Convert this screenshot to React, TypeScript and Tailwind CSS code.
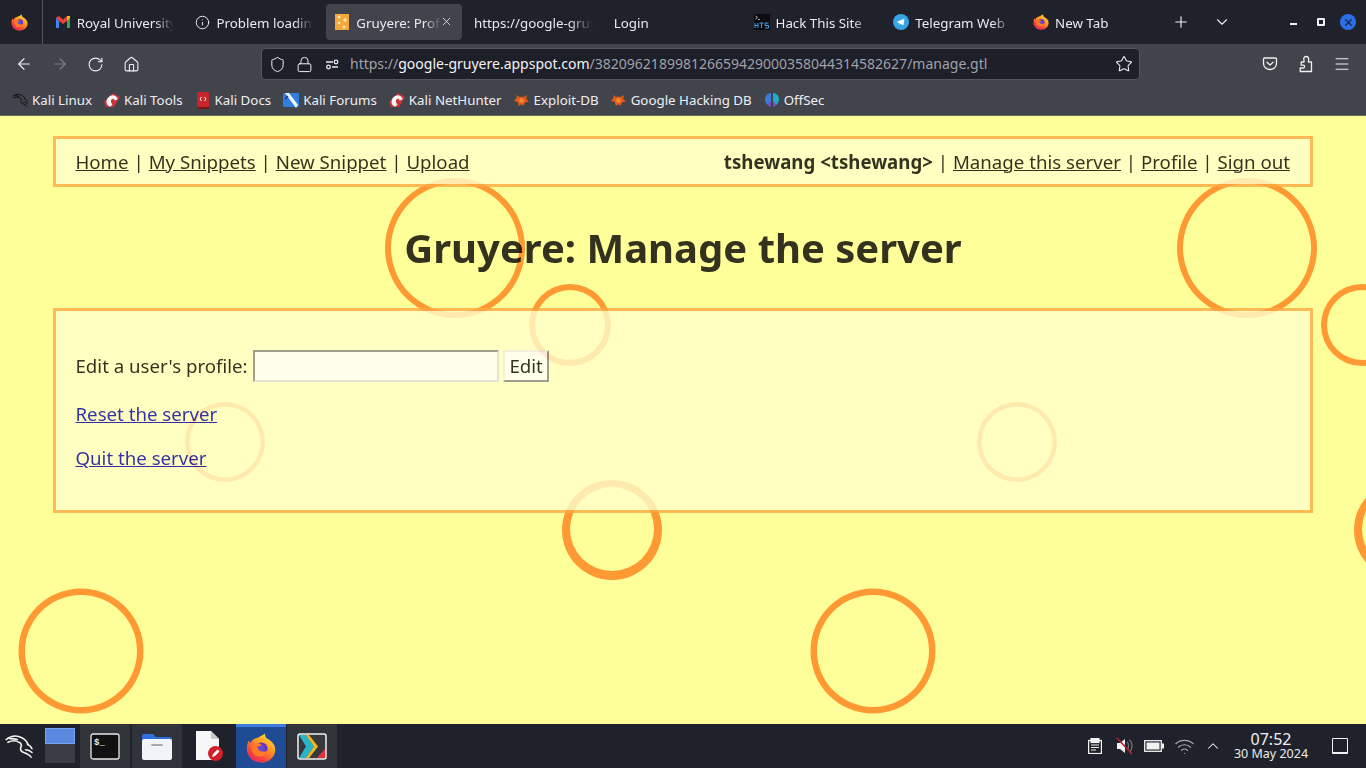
import React from "react";
import { ArrowLeft, ArrowRight, RotateCw, Home, Shield, Lock, Star, Menu, Plus, ChevronDown, ChevronUp, X, Info, Wifi } from "lucide-react";

function FirefoxLogo({ size = 16, id }: { size?: number; id: string }) {
  return (
    <svg width={size} height={size} viewBox="0 0 32 32" className="shrink-0">
      <defs>
        <linearGradient id={id + "a"} x1="0.85" y1="0.05" x2="0.25" y2="0.95">
          <stop offset="0" stopColor="#ffe03a" />
          <stop offset="0.4" stopColor="#ff9a22" />
          <stop offset="0.8" stopColor="#f5423e" />
          <stop offset="1" stopColor="#e92c62" />
        </linearGradient>
        <radialGradient id={id + "b"} cx="0.5" cy="0.5" r="0.5">
          <stop offset="0" stopColor="#5a57ea" />
          <stop offset="1" stopColor="#6a2bb8" />
        </radialGradient>
      </defs>
      <path d="M16 31.500C7 31.500 .8 24.500.8 16.500c0-3.200.9-6.300 2.600-8.700.2 1.400.7 2.500 1.400 3.200C6 7.500 9 5.500 11 5.500 13.500 4.500 17 3 20.500.5c-.6 3 .6 4.700 2.800 6C28.500 9.500 31.200 13 31.200 18c0 7.500-6.700 13.500-15.200 13.500z" fill={`url(#${id}a)`} />
      <circle cx="16.500" cy="16.500" r="6.500" fill={`url(#${id}b)`} />
      <path d="M8 12.500c3-1.800 6-1.500 9 .3-1.700 1.200-3.300 1.700-4.500 1.700-.3 3 2.500 5.500 6.500 5.300 2 0 4-1 5-2.800-.3 4.500-4.300 8-9 8-5 0-9-3.500-9-8.500 0-1.500 1-3 2-4z" fill="#ff7a26" />
    </svg>
  );
}

function Gmail() {
  return (
    <svg width="14" height="12" viewBox="0 0 14 12" className="shrink-0">
      <path d="M0 1.500V12h3V5z" fill="#4285f4" />
      <path d="M14 1.500V12h-3V5z" fill="#34a853" />
      <path d="M0 1.500 3 0l4 3.500L11 0l3 1.500L11 5 7 8 3 5z" fill="#ea4335" />
      <path d="M11 0l3 0v2l-3 3z" fill="#fbbc04" />
    </svg>
  );
}

function Cheese() {
  return (
    <svg width="14" height="16" viewBox="0 0 14 16" className="shrink-0">
      <rect width="14" height="16" fill="#f5a73c" />
      <circle cx="4" cy="3" r="1.500" fill="#ffe9b0" />
      <circle cx="10" cy="6" r="1.800" fill="#ffe9b0" />
      <circle cx="4" cy="9" r="1.300" fill="#ffe9b0" />
      <circle cx="9" cy="13" r="1.500" fill="#ffe9b0" />
    </svg>
  );
}

function Hts() {
  return (
    <svg width="16" height="16" viewBox="0 0 16 16" className="shrink-0">
      <rect width="16" height="16" fill="#0b0d12" />
      <path d="M1.500 2l2 1.500-2 1.500M4 5.500h2" stroke="#e6e6e6" strokeWidth="0.8" fill="none" />
      <path d="M1 9v5M4 9v5M1 11.500h3M5.500 9h4M7.500 9v5M14.500 9h-3.500v2.500h3.500V14H11" stroke="#3fa7e8" strokeWidth="1" fill="none" />
    </svg>
  );
}

function Telegram() {
  return (
    <svg width="16" height="16" viewBox="0 0 16 16" className="shrink-0">
      <circle cx="8" cy="8" r="8" fill="#37a3e6" />
      <path d="M3.500 8 11.500 4.500 10.300 11.500 7.800 9.700 6.500 11 6.300 8.900z" fill="#fff" />
    </svg>
  );
}

function Sliders() {
  return (
    <svg width="16" height="16" viewBox="0 0 16 16" fill="none" stroke="#e8e8ec" strokeWidth="1.300">
      <path d="M2 6h7M14 11H8" />
      <circle cx="12" cy="6" r="1.800" />
      <circle cx="4.500" cy="11" r="1.800" />
    </svg>
  );
}

function Pocket() {
  return (
    <svg width="16" height="16" viewBox="0 0 16 16" fill="none" stroke="#f0f0f4" strokeWidth="1.300" strokeLinecap="round" strokeLinejoin="round">
      <path d="M2.500 2h11c.6 0 1 .4 1 1v4.500c0 3.500-3 6-6.500 6s-6.500-2.500-6.500-6V3c0-.6.4-1 1-1z" />
      <path d="M5 6.300 8 9l3-2.700" />
    </svg>
  );
}

function PuzzlePiece() {
  return (
    <svg width="17" height="18" viewBox="0 0 17 18" fill="none" stroke="#f0f0f4" strokeWidth="1.300" strokeLinejoin="round">
      <path d="M14.500 16.500V7h-3c-.6-1 .4-1.500.2-3C11.500 2.300 10.200 1.500 9 1.500 7.500 1.500 6.500 3 6.800 4.500c.1.800.6 1.200.2 2.500H4.200v3.200h2c1 0 1.500.5 1.500 1.400s-.5 1.400-1.500 1.400h-3v3.500z" />
    </svg>
  );
}

function Dragon({ color, w, h }: { color: string; w: number; h: number }) {
  return (
    <svg width={w} height={h} viewBox="0 0 32 26" fill="none" stroke={color} strokeWidth="1.700" strokeLinecap="round" strokeLinejoin="round" className="shrink-0">
      <path d="M1 6C6 2 12 1 18 4c4 2 6 5 7 8" />
      <path d="M3 9c4-2 9-2 12 0 2 1 3 3 2 5-1 3 0 5 3 6 3 1 6 2 8 5" />
      <path d="M24 11c2 1 4 3 5 5" />
      <path d="M5 5c3 0 5 0 8 1" />
      <path d="M22 17c2 0 5 1 7 3" />
    </svg>
  );
}

function KaliTools() {
  return (
    <svg width="16" height="16" viewBox="0 0 16 16" className="shrink-0">
      <path d="M0 10 9 1l7 4-6 10H2z" fill="#c9343a" />
      <path d="M2.500 10c0-4 4-7.500 7.500-6.500 2 .6 3.500 2 3.500 4l-3 1c0-2-2-2-3-1s-1 3 1 5l-2 2C4 14.500 2.500 12 2.500 10z" fill="#f4f4f4" />
    </svg>
  );
}

function KaliDocs() {
  return (
    <svg width="14" height="17" viewBox="0 0 14 17" className="shrink-0">
      <rect x="1" y="0" width="12" height="15" rx="1" fill="#c8242b" />
      <rect x="1" y="15" width="12" height="2" fill="#7c1418" />
      <path d="M5.500 5 4 7l1.500 2M8.500 5 10 7 8.500 9" stroke="#fff" strokeWidth="1" fill="none" />
    </svg>
  );
}

function KaliForums() {
  return (
    <svg width="16" height="16" viewBox="0 0 16 16" className="shrink-0">
      <rect y="1" width="16" height="14" rx="1" fill="#2f7fe0" />
      <path d="M2 1l4 0 9 12-2 3z" fill="#f1f5fa" />
      <path d="M5 4 2 7" stroke="#16386a" strokeWidth="1.500" />
    </svg>
  );
}

function Exploit() {
  return (
    <svg width="15" height="13" viewBox="0 0 16 14" className="shrink-0">
      <path d="M2 1l3 2h6l3-2-1 4 3 3-4 1-2 4-2-2-3 2-1-4-4-2 3-3z" fill="#e05a18" />
      <circle cx="8" cy="7" r="2.500" fill="#f48a34" />
    </svg>
  );
}

function OffSec() {
  return (
    <svg width="16" height="16" viewBox="0 0 16 16" className="shrink-0">
      <path d="M7 1C3 1 1 4 1 7.500S3 13 7 15z" fill="#3a7bd8" />
      <path d="M9 1c4 0 6 3 6 6.500S13 13 9 15z" fill="#27a7c9" />
      <path d="M7 9v6l-3-2zM9 9v6l3-2z" fill="#8a3fc8" />
    </svg>
  );
}

function Tab({ icon, label, active, close }: { icon?: React.ReactNode; label: string; active?: boolean; close?: boolean }) {
  return (
    <div className="w-[139.75px] h-[44px] shrink-0 px-[2px] py-[4px]">
      <div className={`h-[36px] rounded-[4px] flex items-center pl-[8px] pr-[9px] gap-[6px] ${active ? "bg-[#42444c]" : ""}`}>
        {icon && <span className="w-[16px] shrink-0 flex justify-center">{icon}</span>}
        <span className="flex-1 min-w-0 mt-[1px] overflow-hidden whitespace-nowrap text-[13.33px] leading-[18px] text-[#e9e9ee] [mask-image:linear-gradient(to_right,black_80%,transparent)]">
          {label}
        </span>
        {close && <X size={13} strokeWidth={1.500} className="shrink-0 -ml-[7px] text-[#f0f0f4] -translate-y-[1px]" />}
      </div>
    </div>
  );
}

function Bookmark({ icon, label }: { icon: React.ReactNode; label: string }) {
  return (
    <div className="flex items-center gap-[4px] text-[13.33px] leading-[18px] text-[#eeeef2] whitespace-nowrap">
      <span className="w-[16px] flex justify-center">{icon}</span>
      <span>{label}</span>
    </div>
  );
}

type Ring = [number, number, number, number, number];
// cx, cy (page coordinates), outer radius, ring width, downward thickening
const rings: Ring[] = [
  [455, 248, 70, 6, 0],
  [570, 325, 41, 6, 0],
  [225, 442, 40, 4.500, 0],
  [612, 530, 50, 8, 1],
  [81, 651, 62.500, 6.500, 0],
];

function Bubbles() {
  const paths: React.ReactNode[] = [];
  rings.forEach(([cx, cy, r, s, d], i) => {
    [0, 792].forEach((o) => {
      const x = cx + o;
      const y = cy - 116;
      const ri = r - s;
      const c = (px: number, py: number, rr: number) =>
        `M${px - rr} ${py}a${rr} ${rr} 0 1 0 ${2 * rr} 0a${rr} ${rr} 0 1 0 ${-2 * rr} 0z`;
      paths.push(<path key={`${i}-${o}`} d={c(x, y, r) + c(x, y - d, ri)} fillRule="evenodd" fill="#ff9933" />);
    });
  });
  return (
    <svg className="absolute inset-0 w-full h-full" width="1366" height="608" viewBox="0 0 1366 608">
      {paths}
    </svg>
  );
}

function Sep() {
  return <span className="mx-[4.9px]">|</span>;
}

function TaskTile({ children, active, dim }: { children: React.ReactNode; active?: boolean; dim?: boolean }) {
  return (
    <div className={`w-[50px] h-[44px] shrink-0 flex items-center justify-center ${active ? "bg-[#1f4a94] border-t-[3px] border-[#3b7de0]" : dim ? "" : "bg-[#31333b]"}`}>
      {children}
    </div>
  );
}

export default function App() {
  return (
    <div className="w-[1366px] h-[768px] flex flex-col overflow-hidden font-['Noto_Sans',sans-serif] bg-[#ffff99]">
      {/* tab strip */}
      <div className="h-[44px] shrink-0 bg-[#1f212b] flex items-center text-white">
        <div className="w-[43px] h-[44px] shrink-0 flex items-center justify-center border-r border-[#50525a] pr-[4px]">
          <FirefoxLogo id="ffa" size={17} />
        </div>
        <div className="w-[1.75px] shrink-0" />
        <Tab icon={<Gmail />} label="Royal University of Bhutan" />
        <Tab icon={<Info size={15} strokeWidth={1.500} className="shrink-0 text-[#f0f0f4]" />} label="Problem loading page" />
        <Tab icon={<Cheese />} label="Gruyere: Profile" active close />
        <Tab label="https://google-gruyere.appspot.com" />
        <Tab label="Login" />
        <Tab icon={<Hts />} label="Hack This Site" />
        <Tab icon={<Telegram />} label="Telegram Web" />
        <Tab icon={<FirefoxLogo id="ffb" />} label="New Tab" />
        <Plus size={18} strokeWidth={1.500} className="shrink-0 ml-[9.25px] text-[#f4f4f8]" />
        <ChevronDown size={18} strokeWidth={1.500} className="shrink-0 ml-[23px] text-[#e8e8ee]" />
        <div className="flex-1 flex items-center justify-end pr-[10px] gap-[15px]">
          <div className="w-[7px] h-[2px] bg-[#f0f0f4] mt-[4px]" />
          <div className="w-[8px] h-[8px] border-2 border-[#f0f0f4] ml-[5px] rounded-[1px]" />
          <div className="w-[16px] h-[16px] rounded-full bg-[#2a6fe8] flex items-center justify-center">
            <X size={11} strokeWidth={3} className="text-[#1c2a48]" />
          </div>
        </div>
      </div>
      {/* toolbar */}
      <div className="h-[40px] shrink-0 bg-[#42444c] flex items-center text-[#f0f0f4]">
        <ArrowLeft size={18} strokeWidth={1.500} className="ml-[15px]" />
        <ArrowRight size={18} strokeWidth={1.500} className="ml-[18px] text-[#7d7f86]" />
        <RotateCw size={17} strokeWidth={1.500} className="ml-[18px]" />
        <Home size={17} strokeWidth={1.500} className="ml-[19px]" />
        <div className="w-[879px] h-[32px] ml-[121px] bg-[#1d1f29] rounded-[4px] border border-[#55575f] flex items-center pl-[7px] pr-[6px]">
          <Shield size={17} strokeWidth={1.400} />
          <Lock size={17} strokeWidth={1.400} className="ml-[10px]" />
          <span className="ml-[11px]"><Sliders /></span>
          <span className="ml-[10px] flex-1 text-[14px] leading-[20px] whitespace-nowrap text-[#a0a1a8]">
            https://<span className="text-[#f4f4f6]">google-gruyere.appspot.com</span>/382096218998126659429000358044314582627/manage.gtl
          </span>
          <Star size={18} strokeWidth={1.400} className="text-[#f0f0f4]" />
        </div>
        <span className="ml-[122px]"><Pocket /></span>
        <span className="ml-[19px]"><PuzzlePiece /></span>
        <Menu size={18} strokeWidth={1.400} className="ml-[19px]" />
      </div>
      {/* bookmarks */}
      <div className="h-[32px] shrink-0 bg-[#42444c] border-b border-[#6a6c58] flex items-center pl-[12px] gap-[12px] pt-[1px]">
        <Bookmark icon={<Dragon color="#0c0c0f" w={17} h={14} />} label="Kali Linux" />
        <Bookmark icon={<KaliTools />} label="Kali Tools" />
        <Bookmark icon={<KaliDocs />} label="Kali Docs" />
        <Bookmark icon={<KaliForums />} label="Kali Forums" />
        <Bookmark icon={<KaliTools />} label="Kali NetHunter" />
        <Bookmark icon={<Exploit />} label="Exploit-DB" />
        <Bookmark icon={<Exploit />} label="Google Hacking DB" />
        <Bookmark icon={<OffSec />} label="OffSec" />
      </div>
      {/* page */}
      <div className="relative flex-1 bg-[#ffff99] overflow-hidden">
        <Bubbles />
        <div className="relative opacity-80 px-[53px] pt-[20px] text-black text-[18.67px] leading-[26px]">
          <div className="h-[51px] border-[3px] border-[#ffaa44] bg-[#ffffcc] flex items-center justify-between pl-[19.5px] pr-[20px]">
            <div className="flex items-center">
              <a className="underline">Home</a><Sep />
              <a className="underline">My Snippets</a><Sep />
              <a className="underline">New Snippet</a><Sep />
              <a className="underline">Upload</a>
            </div>
            <div className="flex items-center">
              <b className="font-bold">tshewang &lt;tshewang&gt;</b><Sep />
              <a className="underline">Manage this server</a><Sep />
              <a className="underline">Profile</a><Sep />
              <a className="underline">Sign out</a>
            </div>
          </div>
          <div className="h-[121px] flex items-center justify-center">
            <h1 className="text-[40px] leading-[56px] font-bold">Gruyere: Manage the server</h1>
          </div>
          <div className="h-[205px] border-[3px] border-[#ffaa44] bg-[#ffffcc] pl-[19.5px] pr-[20px] pt-[39px]">
            <div className="flex items-center h-[32px]">
              <span>Edit a user's profile:</span>
              <input className="ml-[5.5px] w-[246px] h-[32px] bg-white border-2 border-t-[#888] border-l-[#888] border-r-[#ddd] border-b-[#ddd]" />
              <button className="ml-[4px] w-[46px] h-[32px] bg-white border-2 border-t-[#eee] border-l-[#eee] border-r-[#888] border-b-[#888] leading-[26px] text-center">Edit</button>
            </div>
            <div className="mt-[19px]"><a className="underline text-[#0000aa]">Reset the server</a></div>
            <div className="mt-[18px]"><a className="underline text-[#0000aa]">Quit the server</a></div>
          </div>
        </div>
      </div>
      {/* taskbar */}
      <div className="h-[44px] shrink-0 bg-[#20222b] flex items-center text-white">
        <div className="w-[45px] shrink-0 flex justify-center pr-[6px]">
          <Dragon color="#f2f2f2" w={30} h={24} />
        </div>
        <div className="w-[30px] h-[35px] shrink-0 flex flex-col mt-[-1px]">
          <div className="h-[16px] bg-[#5a87e0] border border-[#7aa2ee]" />
          <div className="h-[19px] bg-[#3a3c44]" />
        </div>
        <div className="w-[5px] shrink-0" />
        <TaskTile>
          <svg width="30" height="27" viewBox="0 0 30 27">
            <rect x="1" y="1" width="28" height="25" rx="2" fill="#111" stroke="#e8e8e8" strokeWidth="1.300" />
            <text x="4" y="12" fontSize="9" fontWeight="700" fill="#eee" fontFamily="'Liberation Mono', monospace">$_</text>
          </svg>
        </TaskTile>
        <div className="w-[2px] shrink-0" />
        <TaskTile>
          <svg width="30" height="27" viewBox="0 0 30 27">
            <path d="M0 3a2 2 0 0 1 2-2h9l3 3h14a2 2 0 0 1 2 2v4H0z" fill="#2f6fdc" />
            <rect y="6" width="30" height="21" rx="2" fill="#f1f3f6" />
            <rect x="9" y="11" width="12" height="2" rx="1" fill="#a8aab0" />
          </svg>
        </TaskTile>
        <div className="w-[2px] shrink-0" />
        <TaskTile dim>
          <svg width="28" height="30" viewBox="0 0 28 30">
            <path d="M1 0h15l8 8v21H1z" fill="#f7f7f7" />
            <path d="M16 0l8 8h-8z" fill="#c9c9c9" />
            <circle cx="20.500" cy="22.500" r="7.500" fill="#d1202c" />
            <path d="M17 26l1-3 4.500-4.500 2 2L20 25z" fill="#fff" />
          </svg>
        </TaskTile>
        <div className="w-[2px] shrink-0" />
        <TaskTile active>
          <FirefoxLogo size={30} id="ffc" />
        </TaskTile>
        <div className="w-[1px] shrink-0" />
        <TaskTile>
          <svg width="30" height="27" viewBox="0 0 30 27">
            <rect x="1" y="1" width="28" height="25" rx="2" fill="#38393f" stroke="#f2f2f2" strokeWidth="1.500" />
            <path d="M2 2h7l8 11.500L9 25H2l7-11.500z" fill="#28b5c8" />
            <path d="M9 2h3l9 11.500L12 25H9l8-11.500z" fill="#f5b81c" />
            <path d="M28 16v9h-8z" fill="#e3343a" />
          </svg>
        </TaskTile>
        <div className="flex-1" />
        {/* tray */}
        <svg width="14" height="16" viewBox="0 0 14 16" className="mr-[14px]" fill="none" stroke="#f2f2f2" strokeWidth="1.200">
          <rect x="0.600" y="2.500" width="12.800" height="13" fill="none" />
          <rect x="3" y="0" width="8" height="4.500" fill="#f2f2f2" />
          <path d="M3 7h8M3 9.500h8M3 12h5" />
        </svg>
        <svg width="18" height="18" viewBox="0 0 18 18" className="mr-[10px]">
          <path d="M1 6h3l5-4v14l-5-4H1z" fill="#f2f2f2" />
          <path d="M11 5c2 1 2 7 0 8M13 3c4 2 4 10 0 12" stroke="#77797f" strokeWidth="1.200" fill="none" />
          <path d="M1 1l15 16" stroke="#b0202c" strokeWidth="1.700" />
        </svg>
        <svg width="20" height="12" viewBox="0 0 20 12" className="mr-[10px]">
          <rect x="0.700" y="0.700" width="16.600" height="10.600" fill="none" stroke="#f2f2f2" strokeWidth="1.300" />
          <rect x="2.500" y="2.500" width="13" height="7" fill="#f2f2f2" />
          <rect x="18" y="3.500" width="2" height="5" fill="#f2f2f2" />
        </svg>
        <Wifi size={21} strokeWidth={1.300} className="mr-[9px] text-[#a8aab0]" />
        <ChevronUp size={18} strokeWidth={1.400} className="mr-[9px] text-[#f0f0f4]" />
        <div className="w-[80px] flex flex-col items-center">
          <span className="text-[16px] leading-[16px] text-[#f0f0f4]">07:52</span>
          <span className="text-[12.500px] leading-[14px] whitespace-nowrap text-[#eaeaea]">30 May 2024</span>
        </div>
        <div className="w-[16px] h-[16px] border border-[#f2f2f2] border-b-2 ml-[21px] mr-[18px] rounded-[1px]" />
      </div>
    </div>
  );
}
